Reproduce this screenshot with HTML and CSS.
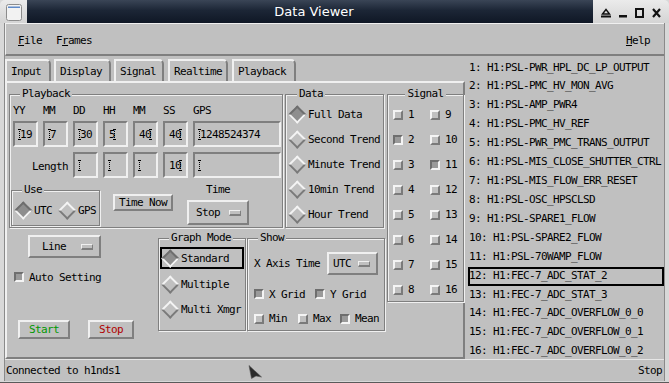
FILE: index.html
```html
<!DOCTYPE html>
<html lang="en">
<head>
  <meta charset="UTF-8" />
  <title>Data Viewer</title>
  <link rel="stylesheet" href="styles.css">
</head>
<body>

<div class="window">
  <div class="titlebar">
    <div class="tb-left">
      <svg width="16" height="17" viewBox="0 0 16 17">
        <rect x="0.5" y="0.5" width="15" height="16" rx="2" fill="#f2f2f2" stroke="#8c8c8c"/>
        <rect x="2" y="2.5" width="12" height="1.5" fill="#5f8ac8"/>
      </svg>
    </div>
    <div class="tb-title">Data Viewer</div>
    <div class="tb-right">
      <svg width="60" height="10" viewBox="0 0 60 10">
        <path d="M1.5 6 L5 1.5 L8.5 6 Z" fill="none" stroke="#111" stroke-width="1.4"/>
        <rect x="0" y="7.5" width="10" height="2" fill="#111"/>
        <rect x="18" y="7" width="8" height="2.5" fill="#111"/>
        <rect x="35" y="1" width="7" height="8" fill="none" stroke="#111" stroke-width="2"/>
        <path d="M52 1 L59 9 M59 1 L52 9" stroke="#111" stroke-width="2.2"/>
      </svg>
    </div>
  </div>

  <div class="client">
    <div class="menubar">
      <span class="menu"><u>F</u>ile</span>
      <span class="menu">F<u>r</u>ames</span>
      <span class="menu help"><u>H</u>elp</span>
    </div>

    <div class="main">
      <div class="leftpane">
        <div class="tabs">
          <div class="tab tab-input">Input</div>
          <div class="tab tab-display">Display</div>
          <div class="tab tab-signal">Signal</div>
          <div class="tab tab-realtime">Realtime</div>
          <div class="tab tab-playback active">Playback</div>
        </div>

        <div class="panel">
          <div class="left-block">
            <div class="row-top">
              <div class="group playback">
                <div class="legend">Playback</div>
                <div class="pb-row pb-labels">
                  <span>YY</span><span>MM</span><span>DD</span><span>HH</span><span>MM</span><span>SS</span><span>GPS</span>
                </div>
                <div class="pb-row pb-fields">
                  <div class="field"><i class="caret"></i>19</div>
                  <div class="field"><i class="caret"></i>7</div>
                  <div class="field"><i class="caret"></i>30</div>
                  <div class="field"><span class="val">5</span><i class="caret after"></i></div>
                  <div class="field"><span class="val">40</span><i class="caret after"></i></div>
                  <div class="field"><span class="val">40</span><i class="caret after"></i></div>
                  <div class="field"><i class="caret"></i>1248524374</div>
                </div>
                <div class="pb-row pb-fields second">
                  <span class="length">Length</span>
                  <div class="field"><i class="caret"></i></div>
                  <div class="field"><i class="caret"></i></div>
                  <div class="field"><i class="caret"></i></div>
                  <div class="field"><span class="val">10</span><i class="caret after"></i></div>
                  <div class="field"><i class="caret"></i></div>
                </div>
                <div class="pb-bottom">
                  <div class="group use">
                    <div class="legend">Use</div>
                    <div class="use-row">
                      <span class="radio"><i class="dia on"></i>UTC</span>
                      <span class="radio"><i class="dia"></i>GPS</span>
                    </div>
                  </div>
                  <div class="button time-now">Time Now</div>
                  <div class="time-col">
                    <div class="time-label">Time</div>
                    <div class="option opt-stop"><span>Stop</span><i class="indicator"></i></div>
                  </div>
                </div>
              </div>

              <div class="group data">
                <div class="legend">Data</div>
                <div class="data-list">
                  <div class="radio row"><i class="dia on"></i>Full Data</div>
                  <div class="radio row"><i class="dia"></i>Second Trend</div>
                  <div class="radio row"><i class="dia"></i>Minute Trend</div>
                  <div class="radio row"><i class="dia"></i>10min Trend</div>
                  <div class="radio row"><i class="dia"></i>Hour Trend</div>
                </div>
              </div>
            </div>

            <div class="row-bottom">
              <div class="left-col">
                <div class="option opt-line"><span>Line</span><i class="indicator"></i></div>
                <div class="check auto"><i class="chk on"></i>Auto Setting</div>
                <div class="start-stop">
                  <div class="button start">Start</div>
                  <div class="button stop">Stop</div>
                </div>
              </div>

              <div class="group graph">
                <div class="legend">Graph Mode</div>
                <div class="radio focus"><i class="dia on"></i>Standard</div>
                <div class="radio row first"><i class="dia"></i>Multiple</div>
                <div class="radio row"><i class="dia"></i>Multi Xmgr</div>
              </div>

              <div class="group show">
                <div class="legend">Show</div>
                <div class="show-axis">
                  <span>X Axis Time</span>
                  <div class="option opt-utc"><span>UTC</span><i class="indicator"></i></div>
                </div>
                <div class="show-grid">
                  <span class="check"><i class="chk on"></i>X Grid</span>
                  <span class="check"><i class="chk on"></i>Y Grid</span>
                </div>
                <div class="show-stats">
                  <span class="check"><i class="chk"></i>Min</span>
                  <span class="check"><i class="chk"></i>Max</span>
                  <span class="check"><i class="chk on"></i>Mean</span>
                </div>
              </div>
            </div>
          </div>

          <div class="group signal">
            <div class="legend">Signal</div>
            <div class="signal-grid">
              <span class="check"><i class="chk"></i>1</span>
              <span class="check"><i class="chk on"></i>2</span>
              <span class="check"><i class="chk"></i>3</span>
              <span class="check"><i class="chk"></i>4</span>
              <span class="check"><i class="chk"></i>5</span>
              <span class="check"><i class="chk"></i>6</span>
              <span class="check"><i class="chk"></i>7</span>
              <span class="check"><i class="chk"></i>8</span>
              <span class="check"><i class="chk"></i>9</span>
              <span class="check"><i class="chk"></i>10</span>
              <span class="check"><i class="chk on"></i>11</span>
              <span class="check"><i class="chk"></i>12</span>
              <span class="check"><i class="chk"></i>13</span>
              <span class="check"><i class="chk"></i>14</span>
              <span class="check"><i class="chk"></i>15</span>
              <span class="check"><i class="chk"></i>16</span>
            </div>
          </div>
        </div>
      </div>

      <div class="list">
        <div class="item">1: H1:PSL-PWR_HPL_DC_LP_OUTPUT</div>
        <div class="item">2: H1:PSL-PMC_HV_MON_AVG</div>
        <div class="item">3: H1:PSL-AMP_PWR4</div>
        <div class="item">4: H1:PSL-PMC_HV_REF</div>
        <div class="item">5: H1:PSL-PWR_PMC_TRANS_OUTPUT</div>
        <div class="item">6: H1:PSL-MIS_CLOSE_SHUTTER_CTRL</div>
        <div class="item">7: H1:PSL-MIS_FLOW_ERR_RESET</div>
        <div class="item">8: H1:PSL-OSC_HPSCLSD</div>
        <div class="item">9: H1:PSL-SPARE1_FLOW</div>
        <div class="item">10: H1:PSL-SPARE2_FLOW</div>
        <div class="item">11: H1:PSL-70WAMP_FLOW</div>
        <div class="item selected">12: H1:FEC-7_ADC_STAT_2</div>
        <div class="item">13: H1:FEC-7_ADC_STAT_3</div>
        <div class="item">14: H1:FEC-7_ADC_OVERFLOW_0_0</div>
        <div class="item">15: H1:FEC-7_ADC_OVERFLOW_0_1</div>
        <div class="item">16: H1:FEC-7_ADC_OVERFLOW_0_2</div>
      </div>
    </div>

    <div class="status">
      <span>Connected to h1nds1</span>
      <span>Stop</span>
    </div>
  </div>

  <!-- mouse pointer left on the status bar -->
  <svg class="pointer" width="15" height="14" viewBox="0 0 15 14">
    <path d="M1 0.5 L13.5 12 L8 11 L3.5 13.5 Z" fill="#2a2a2a" stroke="#555" stroke-width="0.6"/>
  </svg>
</div>

</body>
</html>
```

FILE: styles.css
```css
* {
  box-sizing: border-box;
}

body {
  margin: 0;
  font-family: 'DejaVu Sans Mono', monospace;
  font-size: 11px;
  letter-spacing: -0.62px;
  color: #000;
  background: #d6d6d6;
}

.window {
  position: relative;
  width: 669px;
  height: 383px;
  overflow: hidden;
  background: #d8d8d8;
  border-bottom: 1px solid #5a5a5a;
}

/* title bar */

.titlebar {
  display: flex;
  height: 23px;
}

.tb-left {
  width: 27px;
  padding: 4px 0 0 6px;
  background: linear-gradient(#ebebeb, #d4d4d4);
  border-radius: 5px 0 0 0;
}

.tb-left svg {
  display: block;
}

.tb-title {
  flex: 1;
  background: linear-gradient(#3a4556, #1c2636 45%, #0f1725);
  color: #fff;
  font-family: 'DejaVu Sans', sans-serif;
  font-size: 13px;
  letter-spacing: 0;
  line-height: 23px;
  text-align: center;
  padding-left: 8px;
}

.tb-right {
  width: 76px;
  padding: 8px 0 0 8px;
  background: linear-gradient(#ebebeb, #d4d4d4);
  border-radius: 0 5px 0 0;
}

.tb-right svg {
  display: block;
}

/* client area */

.client {
  display: flex;
  flex-direction: column;
  height: 358px;
  margin: 0 4px;
  background: #c0c0c0;
  border-left: 1px solid #8a8a8a;
  border-right: 1px solid #8a8a8a;
}

.menubar {
  display: flex;
  align-items: center;
  height: 33px;
  padding: 3px 14px 0 12px;
  border-top: 1px solid #f0f0f0;
  border-left: 1px solid #f0f0f0;
  border-bottom: 2px solid #7f7f7f;
}

.menu {
  margin-right: 14px;
}

.menu.help {
  margin: 0 0 0 auto;
}

.main {
  display: flex;
  height: 303px;
}

.leftpane {
  width: 460px;
  display: flex;
  flex-direction: column;
}

.tabs {
  display: flex;
  height: 25px;
  padding-top: 3px;
}

.tab {
  height: 22px;
  line-height: 21px;
  padding-left: 4px;
  margin-right: 3px;
  border: 2px solid #f0f0f0;
  border-right-color: #7f7f7f;
  border-bottom: none;
  border-top-right-radius: 5px;
}

.tab-input { width: 46px; }
.tab-display { width: 57px; }
.tab-signal { width: 50px; margin-right: 4px; }
.tab-realtime { width: 60px; margin-right: 4px; }
.tab-playback { width: 64px; }

.panel {
  flex: 1;
  display: flex;
  padding: 11px 0 0 2px;
  border: 2px solid #f0f0f0;
  border-right-color: #7f7f7f;
  border-bottom-color: #7f7f7f;
}

/* etched group frames */

.group {
  border: 1px solid #7f7f7f;
  box-shadow: inset 1px 1px 0 #f0f0f0, 1px 1px 0 #f0f0f0;
}

.legend {
  display: table;
  height: 14px;
  line-height: 14px;
  margin: -8px 0 0 10px;
  padding: 0 2px;
  background: #c0c0c0;
}

.left-block {
  width: 376px;
  margin-right: 2px;
}

.row-top {
  display: flex;
  height: 134px;
}

.playback {
  width: 274px;
  height: 134px;
  margin-right: 2px;
}

.pb-row {
  display: grid;
  grid-template-columns: repeat(6, 25px) 88px;
  column-gap: 5px;
  margin-left: 3px;
}

.pb-labels {
  height: 14px;
  line-height: 14px;
  margin-top: 3px;
}

.pb-fields {
  height: 26px;
  margin-top: 3px;
}

.pb-fields.second {
  margin-top: 5px;
}

.length {
  grid-column: span 2;
  text-align: right;
  line-height: 26px;
  padding-top: 2px;
}

.field {
  display: flex;
  align-items: center;
  height: 26px;
  padding-left: 3px;
  border: 2px solid #7f7f7f;
  border-right-color: #f0f0f0;
  border-bottom-color: #f0f0f0;
}

.caret {
  display: inline-block;
  width: 3px;
  height: 11px;
  margin-right: -1px;
  background:
    linear-gradient(#000, #000) top / 3px 1px no-repeat,
    linear-gradient(#000, #000) bottom / 3px 1px no-repeat,
    repeating-linear-gradient(#000 0 1px, transparent 1px 2px) center / 1px 100% no-repeat;
}

.caret.after {
  margin: 0 0 0 -2px;
}

.val {
  margin-left: 1px;
}

.pb-bottom {
  display: flex;
  margin-top: 5px;
}

.use {
  width: 89px;
  height: 36px;
  margin: 7px 0 0 1px;
}

.use-row {
  display: flex;
  align-items: center;
  gap: 9px;
  height: 26px;
  padding-left: 5px;
}

.time-now {
  width: 60px;
  height: 17px;
  margin: 11px 0 0 13px;
}

.time-col {
  width: 62px;
  margin-left: 14px;
}

.time-label {
  height: 14px;
  line-height: 14px;
  text-align: center;
}

.opt-stop {
  width: 62px;
  height: 25px;
  margin-top: 3px;
  padding-left: 7px;
}

/* raised buttons and option menus */

.button {
  display: flex;
  align-items: center;
  justify-content: center;
  border: 2px solid #f0f0f0;
  border-right-color: #7f7f7f;
  border-bottom-color: #7f7f7f;
}

.option {
  display: flex;
  align-items: center;
  justify-content: space-between;
  padding-right: 6px;
  border: 2px solid #f0f0f0;
  border-right-color: #7f7f7f;
  border-bottom-color: #7f7f7f;
}

.indicator {
  width: 12px;
  height: 6px;
  border: 1px solid #f0f0f0;
  border-right-color: #7f7f7f;
  border-bottom: 2px solid #7f7f7f;
}

/* radios and checkboxes */

.radio,
.check {
  display: flex;
  align-items: center;
}

.radio {
  gap: 4px;
}

.check {
  gap: 5px;
}

.dia {
  display: flex;
  align-items: center;
  justify-content: center;
  width: 13px;
  height: 13px;
}

.dia::before {
  content: '';
  width: 8.5px;
  height: 8.5px;
  transform: rotate(45deg);
  border: 2px solid;
  border-color: #f4f4f4 #7a7a7a #7a7a7a #f4f4f4;
}

.dia.on::before {
  border-color: #6e6e6e #f4f4f4 #f4f4f4 #6e6e6e;
  background: #8e8e8e;
}

.chk {
  width: 10px;
  height: 10px;
  border: 2px solid;
  border-color: #f4f4f4 #7a7a7a #7a7a7a #f4f4f4;
}

.chk.on {
  border-color: #6e6e6e #f4f4f4 #f4f4f4 #6e6e6e;
  background: #9a9a9a;
}

/* data and signal frames */

.data {
  width: 99px;
  height: 134px;
}

.data .legend {
  margin-left: 11px;
}

.data-list {
  padding: 1px 0 0 5px;
}

.row {
  height: 25px;
}

.signal {
  width: 77px;
  height: 208px;
}

.signal .legend {
  margin: -8px auto 0;
}

.signal-grid {
  display: grid;
  grid-template-columns: 37px 37px;
  grid-template-rows: repeat(8, 25px);
  grid-auto-flow: column;
  padding: 1px 0 0 5px;
}

/* lower part of the panel */

.row-bottom {
  display: flex;
  height: 127px;
}

.left-col {
  width: 149px;
  padding-top: 7px;
}

.opt-line {
  width: 73px;
  height: 23px;
  margin-left: 19px;
  padding-left: 12px;
}

.auto {
  height: 14px;
  margin: 12px 0 0 5px;
}

.start-stop {
  display: flex;
  margin: 36px 0 0 9px;
}

.start {
  width: 52px;
  height: 19px;
  color: #009800;
}

.stop {
  width: 46px;
  height: 19px;
  margin-left: 18px;
  color: #b00000;
}

.graph {
  width: 88px;
  height: 93px;
  margin-top: 10px;
}

.focus {
  width: 84px;
  height: 22px;
  margin: 2px 0 0 1px;
  padding-left: 2px;
  border: 2px solid #000;
}

.graph .row {
  padding-left: 5px;
}

.graph .row.first {
  margin-top: 2.5px;
}

.show {
  width: 138px;
  height: 93px;
  margin: 10px 0 0 1px;
}

.show-axis {
  display: flex;
  align-items: center;
  height: 23px;
  margin-top: 7px;
  padding-left: 6px;
}

.opt-utc {
  width: 51px;
  height: 23px;
  margin-left: 7px;
  padding-left: 4px;
}

.show-grid,
.show-stats {
  display: grid;
  align-items: center;
  padding-left: 6px;
}

.show-grid {
  grid-template-columns: 61px auto;
  height: 25px;
  margin-top: 6.5px;
}

.show-stats {
  grid-template-columns: 44px 42px auto;
  height: 24px;
}

/* channel list */

.list {
  flex: 1;
  padding: 2.5px 0 0 3px;
}

.item {
  height: 18.93px;
  line-height: 18.93px;
  padding-left: 1px;
  white-space: nowrap;
}

.item.selected {
  box-shadow: inset 0 0 0 2px #000;
}

.status {
  display: flex;
  align-items: center;
  justify-content: space-between;
  height: 22px;
  padding: 0 2px 0 1px;
  border-top: 1px solid #e6e6e6;
}

.pointer {
  position: absolute;
  left: 248px;
  top: 365px;
}
```
